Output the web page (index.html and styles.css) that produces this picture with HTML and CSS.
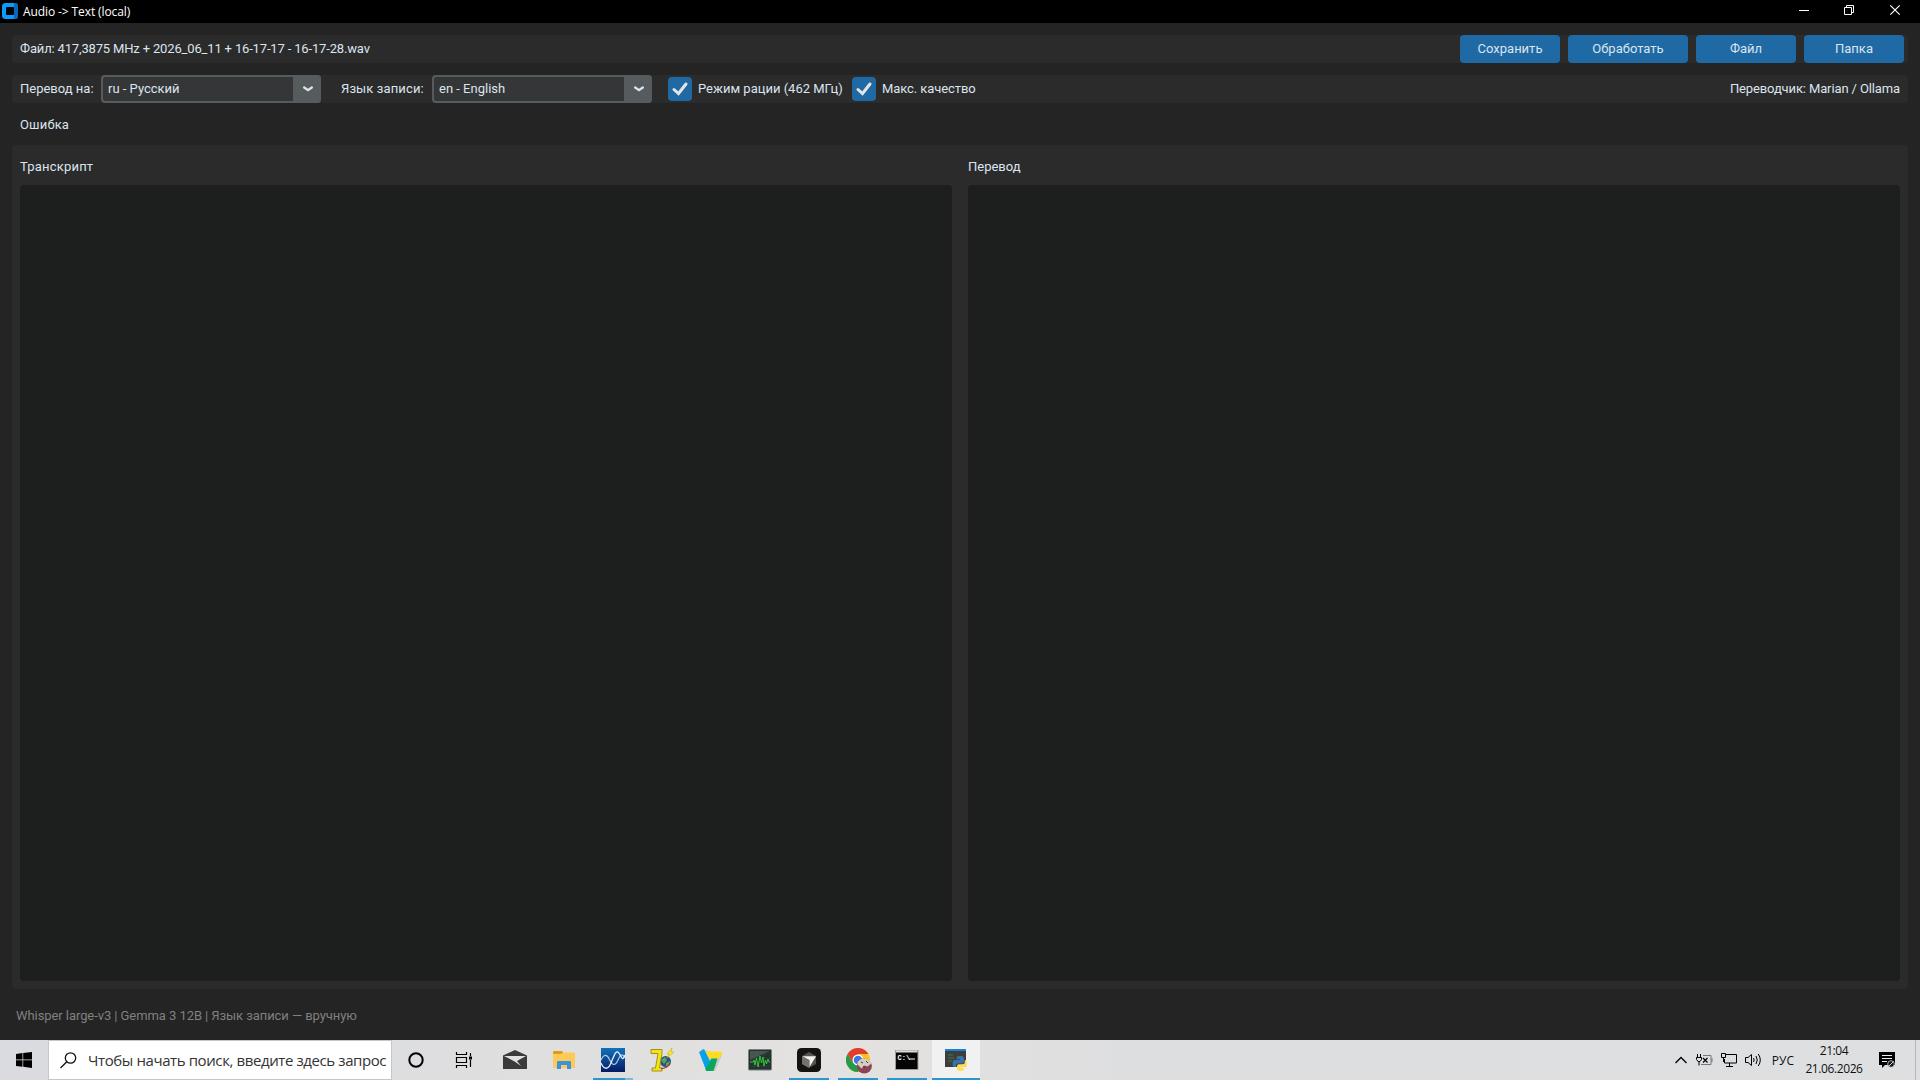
FILE: index.html
```html
<!DOCTYPE html>
<html lang="ru">

<head>
    <meta charset="UTF-8">
    <meta name="viewport" content="width=device-width, initial-scale=1.0">
    <title>Audio -> Text (local)</title>
    <link rel="stylesheet" href="styles.css">
</head>

<body>
    <div class="titlebar">
        <svg class="logo" width="16" height="16" viewBox="0 0 16 16">
            <rect width="16" height="16" rx="3.5" fill="#0a9bfb" />
            <path d="M12 0h1a3 3 0 0 1 3 3v10a3 3 0 0 1-3 3h-1z" fill="#0568b8" />
            <rect x="4" y="4" width="8" height="8" rx="1" fill="#000" />
        </svg>
        <span class="title">Audio -&gt; Text (local)</span>
        <div class="controls">
            <svg width="46" height="23" viewBox="0 0 46 23"><path d="M19 10.5h10" stroke="#fff" /></svg>
            <svg width="46" height="23" viewBox="0 0 46 23" fill="none" stroke="#fff">
                <path d="M18.5 7.5h7v7h-7zM20.5 7.5v-2h7v7h-2" />
            </svg>
            <svg width="46" height="23" viewBox="0 0 46 23"><path d="M18.3 5.3l9.400 9.400M27.700 5.300l-9.400 9.400" stroke="#fff" stroke-width="1.2" /></svg>
        </div>
    </div>

    <div class="app">
        <div class="row file-row">
            <span class="file-name">Файл: 417,3875 MHz + 2026_06_11 + 16-17-17 - 16-17-28.wav</span>
            <div class="buttons">
                <button class="btn">Сохранить</button>
                <button class="btn wide">Обработать</button>
                <button class="btn">Файл</button>
                <button class="btn">Папка</button>
            </div>
        </div>

        <div class="row options">
            <span class="lbl-to">Перевод на:</span>
            <div class="combo">
                <span>ru - Русский</span>
                <div class="arrow"><svg width="10" height="6" viewBox="0 0 10 6"><path d="M1.2 1.500L5 4.200l3.800-2.700" /></svg></div>
            </div>
            <span class="lbl-lang">Язык записи:</span>
            <div class="combo">
                <span>en - English</span>
                <div class="arrow"><svg width="10" height="6" viewBox="0 0 10 6"><path d="M1.2 1.500L5 4.200l3.800-2.700" /></svg></div>
            </div>
            <div class="check radio-mode">
                <svg width="24" height="24" viewBox="0 0 24 24"><path d="M6 12.500l4.500 4L18 7" /></svg>
                <span>Режим рации (462 МГц)</span>
            </div>
            <div class="check max-quality">
                <svg width="24" height="24" viewBox="0 0 24 24"><path d="M6 12.500l4.500 4L18 7" /></svg>
                <span>Макс. качество</span>
            </div>
            <span class="engine">Переводчик: Marian / Ollama</span>
        </div>

        <div class="status">Ошибка</div>

        <div class="panels">
            <div class="panel">
                <div class="panel-title transcript">Транскрипт</div>
                <div class="textbox"></div>
            </div>
            <div class="panel">
                <div class="panel-title">Перевод</div>
                <div class="textbox"></div>
            </div>
        </div>

        <div class="footer">Whisper large-v3 | Gemma 3 12B | Язык записи — вручную</div>
    </div>

    <div class="taskbar">
        <div class="start">
            <svg width="16" height="16" viewBox="0 0 16 16"><path d="M0 2l6.500-.9v6.400H0zM7.200 1L16 0v7.500H7.200zM0 8.200h6.500v6.500L0 13.900zM7.200 8.200H16V16l-8.800-1.200z" /></svg>
        </div>
        <div class="search">
            <svg width="17" height="17" viewBox="0 0 17 17" fill="none" stroke="#111" stroke-width="1.3"><circle cx="10.5" cy="6" r="5.2" /><path d="M6.800 9.700L.5 16" /></svg>
            <span>Чтобы начать поиск, введите здесь запрос</span>
        </div>
        <div class="apps">
            <div class="app-icon cortana">
                <svg width="16" height="16" viewBox="0 0 16 16"><circle cx="8" cy="8" r="6.7" fill="none" stroke="#000" stroke-width="2" /></svg>
            </div>
            <div class="app-icon taskview">
                <svg width="18" height="16" viewBox="0 0 18 16" fill="none" stroke="#000" stroke-width="1.2">
                    <path d="M1.500 0v2.500h10V0M1.500 5.500h10v5h-10zM1.500 16v-2.500h10V16M15.500 1v3M15.500 8v7" />
                    <rect x="14" y="4.5" width="3" height="3" fill="#000" stroke="none" />
                </svg>
            </div>
            <div class="app-icon">
                <svg width="24" height="20" viewBox="0 0 24 20">
                    <path d="M0 5.500L12 0l12 5.500V19H0z" fill="#3b3b3b" />
                    <path d="M1 6h22l-9 5 4 5-6-4.300z" fill="#e2e2e4" />
                </svg>
            </div>
            <div class="app-icon">
                <svg width="22" height="18" viewBox="0 0 22 18">
                    <path d="M0 1.500Q0 0 1.500 0H9l1.500 1.500H22V17H0z" fill="#fccb57" />
                    <path d="M0 1.500Q0 0 1.500 0H9l1 1.500L8 3H0z" fill="#e09a13" />
                    <path d="M4 18v-7q0-1 1-1h12q1 0 1 1v7h-4v-4H8v4z" fill="#3d92dc" />
                </svg>
            </div>
            <div class="app-icon run-group">
                <svg width="24" height="24" viewBox="0 0 24 24" fill="none">
                    <defs><linearGradient id="sdr" x2="0" y2="1"><stop stop-color="#1272bb" /><stop offset="1" stop-color="#041a62" /></linearGradient></defs>
                    <rect width="24" height="24" fill="url(#sdr)" />
                    <path d="M0 12C3 6 6 6 8.500 11.500S14 19 17 12s5-6 7-2" stroke="#a9c8ea" stroke-width="1.200" />
                    <path d="M0 15c3 7 7 7 10 0s5-15 8.500-9 3 6 5.500 1" stroke="#e6eef8" stroke-width="1.300" />
                </svg>
            </div>
            <div class="app-icon">
                <svg width="24" height="24" viewBox="0 0 24 24">
                    <circle cx="15.500" cy="13.500" r="5.500" fill="#2c5577" />
                    <path d="M11 12l4-3 2 3-3 4zM16 15l4-2-1 4-3 2z" fill="#55a46b" />
                    <path d="M1 1.500h11v3.500L9.500 20H12v3H2v-3h3.500L8 5.500H1z" fill="#f4e412" stroke="#8b7e10" stroke-width=".8" />
                    <path d="M22 0l-5 6h2.500L17 10l7-6h-3z" fill="#ffef22" stroke="#b7a71a" stroke-width=".5" />
                    <path d="M11 20.500q6 0 9-5" stroke="#c02c26" stroke-width="1.300" fill="none" />
                </svg>
            </div>
            <div class="app-icon">
                <svg width="24" height="24" viewBox="0 0 24 24">
                    <path d="M2 1l21 6-7 16H7z" fill="#c4c9cc" />
                    <path d="M6.500 3.500H22l1.500 2-3.500 5H9.500z" fill="#ffdc22" />
                    <path d="M0 4l5-3 6.500 13L7 22z" fill="#08a0e8" />
                    <path d="M12.500 10.500h6L14.500 23H7l-.5-2z" fill="#0aa65b" />
                </svg>
            </div>
            <div class="app-icon">
                <svg width="24" height="22" viewBox="0 0 24 22">
                    <rect x=".5" y=".5" width="23" height="20.5" rx="1" fill="#26302d" stroke="#77818a" />
                    <path d="M2 2h20L2 11z" fill="#4b5753" />
                    <path d="M2 5h20M2 9h20M2 13h20M2 17h20M6 2v17M11 2v17M16 2v17" stroke="#3b5145" stroke-width=".5" />
                    <path d="M2 13h3l1-2 1 5 1.500-7 1.500 9 2-11 1.500 7 1.500-6 1 9 1.500-6 1 4 1.500-5 1 3h1" fill="none" stroke="#2fd03a" stroke-width=".9" />
                </svg>
            </div>
            <div class="app-icon run">
                <svg width="24" height="24" viewBox="0 0 24 24">
                    <rect width="24" height="24" rx="4.5" fill="#15130f" />
                    <path d="M12 4l7 4v8l-7 4-7-4V8z" fill="#55534f" />
                    <path d="M5 8l7 4v8l-7-4z" fill="#74726d" />
                    <path d="M5.500 8.300H19L12.500 19v-7z" fill="#f3f2ee" />
                </svg>
            </div>
            <div class="app-icon run">
                <svg class="chrome" width="26" height="26" viewBox="0 0 26 26">
                    <circle cx="12" cy="12" r="12" fill="#fbc31b" />
                    <path d="M1.600 6A12 12 0 0 1 22.400 6H12l-5.200 9z" fill="#e33b2e" />
                    <path d="M1.600 6A12 12 0 0 0 12 24l5.200-9H6.800z" fill="#229b4b" />
                    <circle cx="12" cy="12" r="5.5" fill="#fff" />
                    <circle cx="12" cy="12" r="4.3" fill="#3579e3" />
                    <circle cx="18.3" cy="18" r="7.6" fill="#8a4658" />
                    <path d="M11 16q1-5 7-5.500 6 0 7.500 5l-4 3-3-1-3 3z" fill="#d8cbbf" />
                    <path d="M15 14l2 1M20 13l2 2M17 18l2 2" stroke="#463a38" />
                </svg>
            </div>
            <div class="app-icon run">
                <svg width="24" height="20" viewBox="0 0 24 20">
                    <rect x=".5" y=".5" width="22.5" height="19" fill="#050505" stroke="#9c9c9c" />
                    <path d="M1 1.500h21.500" stroke="#dadada" stroke-width="2" />
                    <path d="M14 9h6" stroke="#fff" />
                    <text class="prompt" x="2.5" y="9.5">C:\</text>
                </svg>
            </div>
            <div class="app-icon run active">
                <svg width="24" height="24" viewBox="0 0 24 24">
                    <path d="M1 1h21v18H1z" fill="#3c3d3f" />
                    <path d="M1 1h21v2H1z" fill="#1683d8" />
                    <path d="M4 7h5M4 10h6M4 13h4" stroke="#3d7a46" />
                    <path d="M15 8h2.500q2.500 0 2.500 2.500v3q0 2-2 2h-4q-2 0-2 2v1.500h-1.500Q8.500 19 8.500 15.500T11 12h5v-.8h-3.500v-1Q12.500 8 15 8z" fill="#3673a9" />
                    <path d="M20.800 12H21q2 0 2 3.500T21 19h-4.500v.8h3.500v1q0 2.200-3 2.200-4 0-4-2.200V18q0-1.800 2-1.800h3.500q2.300 0 2.300-2.200z" fill="#ffdc56" />
                </svg>
            </div>
        </div>
        <div class="tray">
            <svg class="chevron" width="12" height="8" viewBox="0 0 12 8"><path d="M.5 7L6 1.500 11.500 7" /></svg>
            <svg class="battery" width="17" height="12" viewBox="0 0 17 12">
                <path d="M1.500 0v3M4.500 0v3M.5 3.500h5v2l-1.500 2H2l-1.500-2zM3 8v3.500" stroke="#000" />
                <path d="M7 1.500h8v9H5M16 4v4" stroke="#777" />
                <path d="M7 4l4.500 4.500M11.500 4L7 8.500" stroke="#000" stroke-width="1.2" />
            </svg>
            <svg class="network" width="16" height="14" viewBox="0 0 16 14">
                <path d="M5 1.500h10.500v8.500H3.500V6M8.500 10v3M5 13.500h7M.5.5h4v4h-4zM2.500 5v4" stroke="#000" />
            </svg>
            <svg class="volume" width="17" height="14" viewBox="0 0 17 14">
                <path d="M.5 4.500H3l3.500-3v11l-3.500-3H.5zM8.500 5q1.300 2 0 4M11 3q2.500 4 0 8M13.300 1q4 6 0 12" stroke="#000" />
            </svg>
            <span class="lang">РУС</span>
            <div class="clock"><span>21:04</span><span>21.06.2026</span></div>
            <svg class="notify" width="17" height="17" viewBox="0 0 17 17">
                <path d="M0 0h16v13H6l-3 3v-3H0z" />
                <path d="M3 3.500h10M3 6.500h10M3 9.500h5" stroke="#eee" />
                <circle cx="12" cy="12" r="3.3" fill="#111" stroke="#ddd" stroke-width=".8" />
                <path d="M9.500 14.500l5-5" stroke="#ddd" />
            </svg>
        </div>
    </div>
</body>

</html>
```

FILE: styles.css
```css
* {
    box-sizing: border-box;
    margin: 0;
    padding: 0;
}

body {
    width: 1920px;
    height: 1080px;
    overflow: hidden;
    display: flex;
    flex-direction: column;
    background-color: #242424;
    color: #dce4ee;
    font-family: Roboto, sans-serif;
    font-size: 13px;
    white-space: nowrap;
}

svg {
    display: block;
    flex: none;
}

/* window header */
.titlebar {
    height: 23px;
    background-color: black;
    color: white;
    display: flex;
    align-items: center;
    padding-left: 2px;
}

.logo {
    margin-top: -1px;
}

.title {
    margin-left: 5px;
    font-family: "Open Sans", "Noto Sans", sans-serif;
    font-size: 12px;
    letter-spacing: -0.1px;
}

.controls {
    display: flex;
    margin-left: auto;
    margin-right: 2px;
}

/* application */
.app {
    height: 1017px;
    padding: 12px 12px 0;
    display: flex;
    flex-direction: column;
}

.row {
    height: 28px;
    background-color: #2b2b2b;
    border-radius: 4px;
    display: flex;
    align-items: center;
    padding: 0 8px;
    margin-bottom: 12px;
}

/* lifts the labels to the optical middle of the row */
.row span {
    padding-bottom: 2px;
}

.file-row {
    padding-right: 4px;
}

.file-name {
    letter-spacing: -0.16px;
}

.buttons {
    display: flex;
    gap: 8px;
    margin-left: auto;
}

.btn {
    width: 100px;
    height: 28px;
    padding-bottom: 2px;
    border: none;
    border-radius: 4px;
    background-color: #1f6aa5;
    color: #dce4ee;
    font: inherit;
}

.wide {
    width: 120px;
}

.lbl-to {
    width: 81px;
}

.lbl-lang {
    width: 91px;
    margin-left: 20px;
    letter-spacing: 0.12px;
}

.combo {
    width: 220px;
    height: 28px;
    border: 2px solid #565b5e;
    border-right: none;
    border-radius: 4px;
    background-color: #343638;
    display: flex;
    align-items: center;
    padding-left: 5px;
}

.arrow {
    width: 28px;
    height: 28px;
    margin-left: auto;
    background-color: #565b5e;
    border-radius: 0 4px 4px 0;
    display: flex;
    align-items: center;
    justify-content: center;
    padding-left: 1px;
}

.arrow path {
    fill: none;
    stroke: #dce4ee;
    stroke-width: 2.3;
    stroke-linecap: round;
}

.check {
    display: flex;
    align-items: center;
    gap: 6px;
    margin-left: 8px;
}

.radio-mode {
    width: 176px;
    margin-left: 16px;
}

.max-quality {
    letter-spacing: -0.08px;
}

.check svg {
    background-color: #1f6aa5;
    border-radius: 4px;
}

.check path {
    fill: none;
    stroke: #e5e5e5;
    stroke-width: 3;
    stroke-linecap: round;
}

.engine {
    margin-left: auto;
    letter-spacing: -0.12px;
}

.status {
    height: 28px;
    line-height: 28px;
    padding-left: 8px;
    margin: -4px 0 6px;
    letter-spacing: 0.15px;
}

.panels {
    height: 844px;
    background-color: #2b2b2b;
    border-radius: 4px;
    padding: 8px;
    display: flex;
    gap: 16px;
}

.panel {
    flex: 1;
    display: flex;
    flex-direction: column;
}

.panel-title {
    height: 32px;
    line-height: 28px;
}

.transcript {
    letter-spacing: 0.2px;
}

.textbox {
    height: 796px;
    border-radius: 4px;
    background-color: #1d1e1e;
}

.footer {
    margin-top: 13px;
    padding-left: 4px;
    line-height: 28px;
    color: #808080;
    letter-spacing: -0.07px;
}

/* taskbar */
.taskbar {
    height: 40px;
    background: linear-gradient(90deg, #d9dbe0, #dfdfdf 30%, #e4e2e0 43%, #dddee0 60%, #dedfe1);
    color: #111;
    display: flex;
    font-family: "Open Sans", "Noto Sans", sans-serif;
}

.start {
    width: 48px;
    padding: 12px 16px;
}

.search {
    width: 344px;
    border: 1px solid #c6c6c8;
    background-color: white;
    display: flex;
    align-items: center;
    padding-left: 11px;
    color: #333;
    font-size: 15px;
}

.search span {
    margin-left: 11px;
    letter-spacing: -0.4px;
}

.apps {
    display: flex;
    padding-left: 1px;
}

.app-icon {
    width: 49px;
    height: 40px;
    display: flex;
    align-items: center;
    justify-content: center;
}

.cortana {
    width: 46px;
}

.taskview {
    width: 49px;
    margin-right: 2px;
}

.run {
    background: linear-gradient(#2d95cf, #2d95cf) center bottom / 40px 2px no-repeat;
}

.run-group {
    background: linear-gradient(90deg, #2d95cf 32px, #7dbbdc 32px) center bottom / 40px 2px no-repeat;
}

.active {
    width: 48px;
    margin-left: 1px;
    background-color: #f1f1f2;
    background-size: 48px 2px;
}

.chrome {
    margin: 2px 0 0 2px;
}

.prompt {
    font: bold 7px "Liberation Mono", monospace;
    fill: white;
}

.tray {
    display: flex;
    align-items: center;
    margin-left: auto;
    padding-right: 4px;
    border-right: 1px solid #b4b6ba;
    margin-right: 4px;
}

.tray path {
    fill: none;
}

.chevron path {
    stroke: black;
    stroke-width: 1.3;
}

.battery {
    margin-left: 9px;
}

.network {
    margin-left: 8px;
}

.volume {
    margin-left: 8px;
}

.lang {
    margin-left: 10px;
    font-size: 12px;
}

.clock {
    width: 60px;
    margin-left: 10px;
    display: flex;
    flex-direction: column;
    align-items: center;
    font-size: 12px;
    line-height: 18px;
    letter-spacing: -0.4px;
}

.notify {
    margin: 0 15px;
}

.tray .notify path:first-child {
    fill: black;
}
```
